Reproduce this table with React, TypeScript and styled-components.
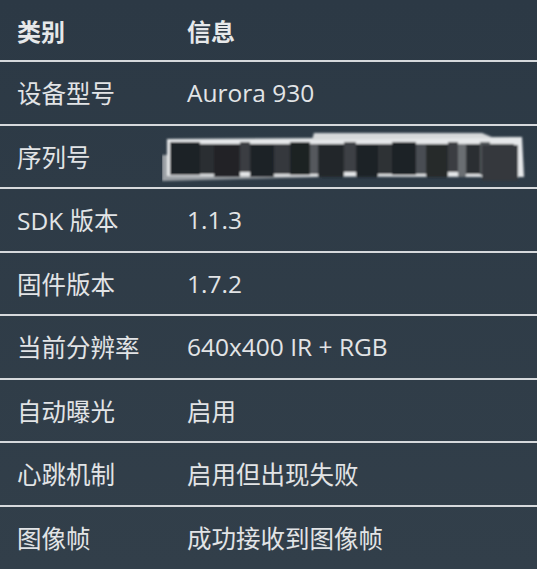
import React from "react";
import styled, {createGlobalStyle} from "styled-components";

const GlobalStyle = createGlobalStyle`
  html, body {
    margin: 0;
    padding: 0;
    background: #2f3c48;
  }
`;

const Page = styled.div`
  width: 537px;
  height: 569px;
  overflow: hidden;
  background: linear-gradient(180deg, #2c3945 0%, #323f4a 100%);
  font-family: "Open Sans", "Noto Sans CJK SC", sans-serif;
  color: #e2e4e6;
`;

const StyledTable = styled.table`
  width: 100%;
  table-layout: fixed;
  border-collapse: collapse;
  white-space: nowrap;
`;

const Th = styled.th<{ $w?: number }>`
  height: 61px;
  padding: 0 0 0 17px;
  text-align: left;
  font-size: 24px;
  font-weight: 700;
  color: #e6e8ea;
  border-bottom: 2px solid #d6d9dc;
  width: ${p => (p.$w ? `${p.$w}px` : "auto")};
  box-sizing: border-box;
`;

const Tr = styled.tr`
  &:not(:last-child) td {
    border-bottom: 2px solid #d6d9dc;
  }
`;

const Td = styled.td`
  height: 61.5px;
  padding: 0 0 0 17px;
  font-size: 24.5px;
  font-weight: 400;
  vertical-align: middle;
  overflow: visible;
`;

const Redacted = styled.svg`
  display: block;
  margin-left: -25px;
  margin-top: 4px;
`;

// dark bars of the scribbled-out serial number: [x, width, shade]
const bars: [number, number, string][] = [
  [8, 30, "#1d2125"], [38, 14, "#2a2e32"], [52, 26, "#202427"], [78, 10, "#3a3e42"],
  [88, 24, "#1f2326"], [112, 16, "#34383c"], [128, 20, "#1d2124"], [148, 8, "#55595d"],
  [156, 26, "#232629"], [182, 12, "#3d4145"], [194, 22, "#1f2326"], [216, 14, "#2e3236"],
  [230, 24, "#1e2225"], [254, 10, "#4a4e52"], [264, 22, "#26292c"], [286, 10, "#3a3e42"],
  [296, 8, "#6a6e72"], [304, 14, "#2b2f33"], [318, 10, "#505458"], [328, 24, "#2a2d30"],
];

function SerialRedaction() {
  return (
    <Redacted width="370" height="54" viewBox="0 0 370 54">
      <defs>
        <filter id="blur" x="-5%" y="-20%" width="110%" height="140%">
          <feGaussianBlur stdDeviation="1"/>
        </filter>
      </defs>
      <g filter="url(#blur)">
        <polygon points="0,24 120,22 240,36 240,44 0,50" fill="#9ca1a6"/>
        <polygon points="5,8 360,6 362,46 5,45" fill="#e6e8ea"/>
        <polygon points="150,9 152,2 320,2 332,7" fill="#d6d8da"/>
        {bars.map(([x, w, c], i) => (
          <rect key={i} x={x} y={i % 3 === 0 ? 11 : 13} width={w} height={i % 2 ? 30 : 33} fill={c}/>
        ))}
        <rect x="320" y="14" width="36" height="36" fill="#34383c"/>
      </g>
    </Redacted>
  );
}

const rows: [string, React.ReactNode][] = [
  ["设备型号", "Aurora 930"],
  ["序列号", <SerialRedaction/>],
  ["SDK 版本", "1.1.3"],
  ["固件版本", "1.7.2"],
  ["当前分辨率", "640x400 IR + RGB"],
  ["自动曝光", "启用"],
  ["心跳机制", "启用但出现失败"],
  ["图像帧", "成功接收到图像帧"],
];

export default function App() {
  return (
    <Page>
      <GlobalStyle/>
      <StyledTable>
        <thead>
        <tr>
          <Th $w={170}>类别</Th>
          <Th>信息</Th>
        </tr>
        </thead>
        <tbody>
        {rows.map(([label, value], i) => (
          <Tr key={i}>
            <Td>{label}</Td>
            <Td>{value}</Td>
          </Tr>
        ))}
        </tbody>
      </StyledTable>
    </Page>
  );
}
